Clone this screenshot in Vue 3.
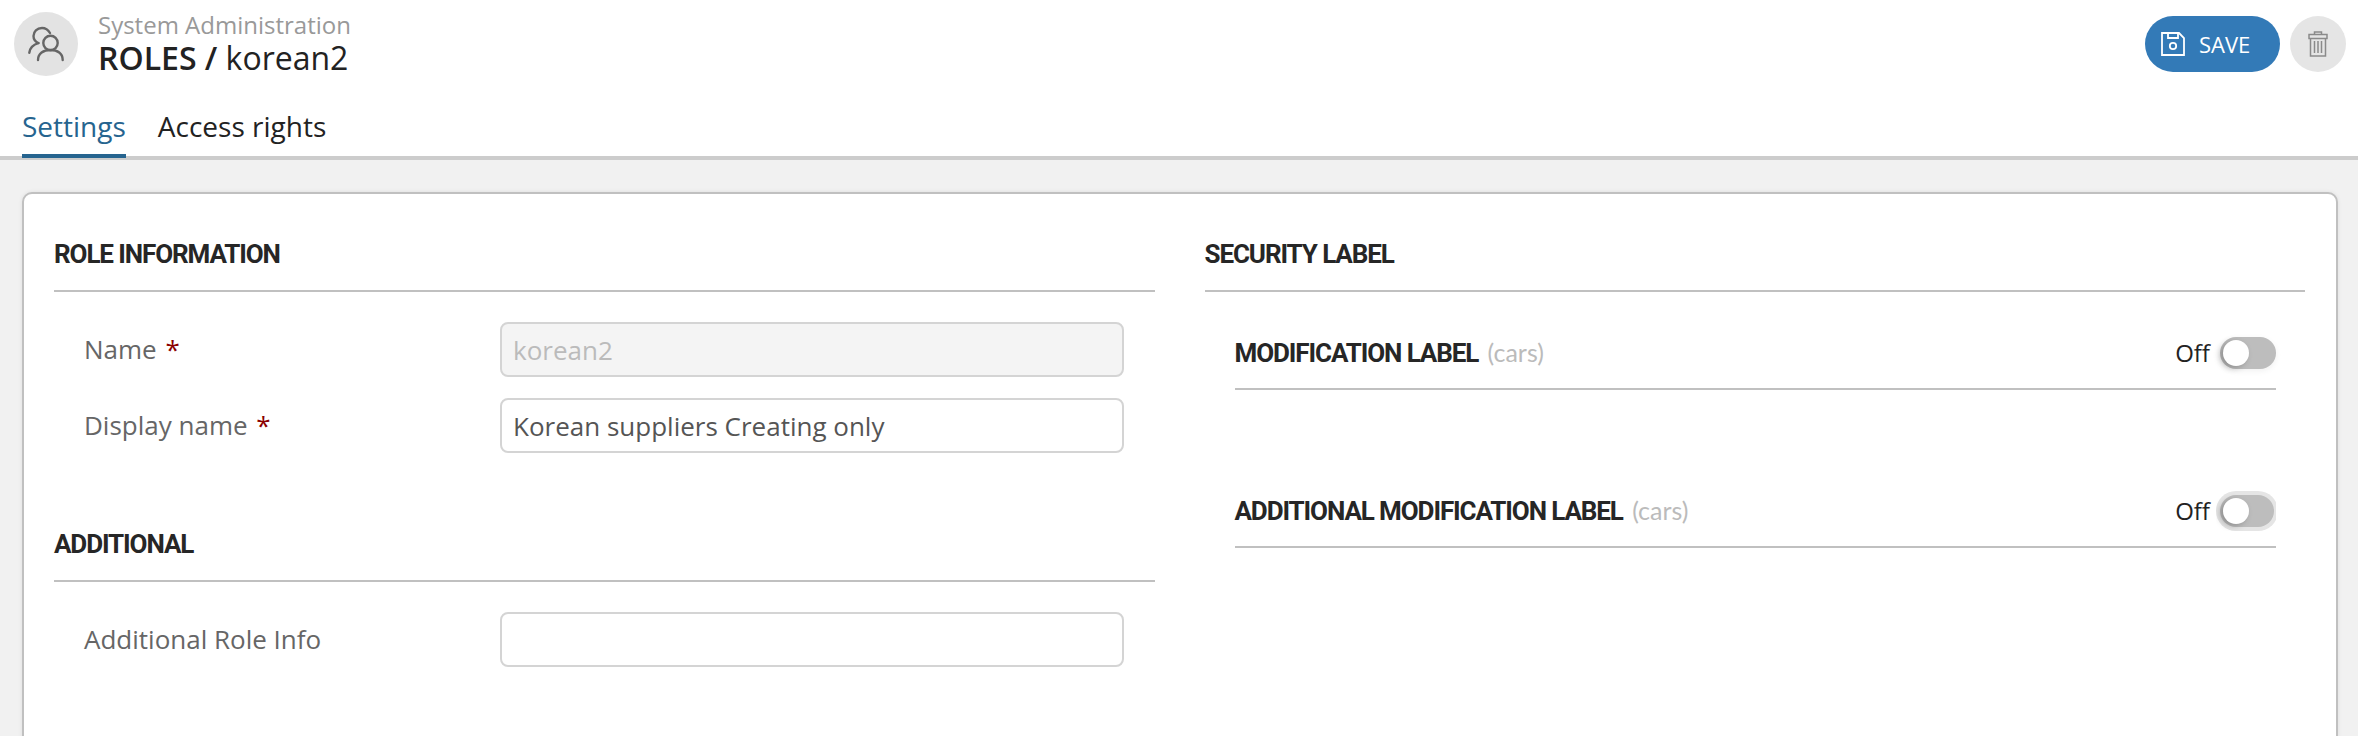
<script setup>
const leftTop = [
  { label: 'Name', required: true, value: 'korean2', disabled: true },
  { label: 'Display name', required: true, value: 'Korean suppliers Creating only', disabled: false }
]
const labels = [
  { title: 'MODIFICATION LABEL', focused: false },
  { title: 'ADDITIONAL MODIFICATION LABEL', focused: true }
]
</script>

<template>
  <div class="page">
    <header class="top">
      <div class="title-bar">
        <div class="avatar">
          <svg width="40" height="40" viewBox="0 0 40 40" fill="none" stroke="#666" stroke-width="2.4" stroke-linecap="round">
            <circle cx="24.500" cy="19" r="7.200" />
            <path d="M12 36c0-6.500 5.500-10 12.500-10S36.700 29.500 36.700 36" />
            <path d="M24 9C22 5.500 19 4 16 4 11 4 7.500 7.500 7.500 12c0 3 2 5.800 5 7" />
            <path d="M3.300 28.700c.7-4.700 4-8 9-9.500" />
          </svg>
        </div>
        <div class="titles">
          <div class="crumb">System Administration</div>
          <div class="title"><b>ROLES /</b> korean2</div>
        </div>
        <div class="actions">
          <button class="save" type="button">
            <svg width="24" height="24" viewBox="0 0 24 24" fill="none" stroke="#fff" stroke-width="1.800">
              <path d="M1 1h17l5 5v17H1z" />
              <path d="M7 1v5h10V1" />
              <circle cx="12" cy="14" r="3.200" />
            </svg>
            <span>SAVE</span>
          </button>
          <button class="trash" type="button" aria-label="Delete">
            <svg width="20" height="26" viewBox="0 0 20 26" fill="none" stroke="#8a8a8a" stroke-width="1.500">
              <path d="M1 3.500h18v4H1z" />
              <path d="M6.500 3.500V1h7v2.500" />
              <path d="M2.500 7.500V25h15V7.500" />
              <path d="M6.500 10v12M10 10v12M13.500 10v12" />
            </svg>
          </button>
        </div>
      </div>
      <nav class="tabs">
        <a class="tab active">Settings</a>
        <a class="tab">Access rights</a>
      </nav>
    </header>

    <main class="content">
      <section class="card">
        <div class="col">
          <h2 class="heading">ROLE INFORMATION</h2>
          <div class="fields">
            <div v-for="f in leftTop" :key="f.label" class="field">
              <label class="label">{{ f.label }} <span v-if="f.required" class="req">*</span></label>
              <input class="input" :value="f.value" :disabled="f.disabled" />
            </div>
          </div>
          <h2 class="heading second">ADDITIONAL</h2>
          <div class="fields">
            <div class="field">
              <label class="label">Additional Role Info</label>
              <input class="input" value="" />
            </div>
          </div>
        </div>
        <div class="col">
          <h2 class="heading">SECURITY LABEL</h2>
          <div class="switch-rows">
            <div v-for="l in labels" :key="l.title" class="switch-row">
              <div class="switch-name">{{ l.title }} <span class="muted">(cars)</span></div>
              <div class="switch-wrap">
                <span class="off">Off</span>
                <span class="toggle" :class="{ focused: l.focused }"><span class="knob"></span></span>
              </div>
            </div>
          </div>
        </div>
      </section>
    </main>
  </div>
</template>

<style scoped>
.page {
  height: 736px;
  overflow: hidden;
  background: #f1f1f1;
  font-family: "Open Sans", "Liberation Sans", sans-serif;
  color: #222;
  display: flex;
  flex-direction: column;
}
.top {
  background: #fff;
  border-bottom: 4px solid #ccc;
  height: 160px;
  box-sizing: border-box;
}
.title-bar {
  display: flex;
  align-items: flex-start;
  height: 100px;
  padding: 12px 12px 0 14px;
  box-sizing: border-box;
}
.avatar {
  width: 64px;
  height: 64px;
  border-radius: 50%;
  background: #e3e3e3;
  display: flex;
  align-items: center;
  justify-content: center;
  flex: none;
}
.titles {
  margin-left: 20px;
  flex: 1;
}
.crumb {
  font-size: 24px;
  line-height: 26px;
  color: #999;
}
.title {
  font-size: 32px;
  line-height: 40px;
  color: #222;
}
.title b { font-weight: 600; }
.actions {
  display: flex;
  gap: 10px;
  margin-top: 4px;
}
.save {
  height: 56px;
  width: 135px;
  border: 0;
  border-radius: 28px;
  background: #337ab7;
  color: #fff;
  font: 400 22px "Open Sans", sans-serif;
  display: flex;
  align-items: center;
  gap: 14px;
  padding: 0 0 0 16px;
}
.trash {
  width: 56px;
  height: 56px;
  border: 0;
  border-radius: 50%;
  background: #e5e5e5;
  display: flex;
  align-items: center;
  justify-content: center;
  padding: 0;
}
.tabs {
  display: flex;
  gap: 32px;
  padding-left: 22px;
  height: 58px;
}
.tab {
  font-size: 28px;
  line-height: 38px;
  padding-top: 7px;
  height: 58px;
  box-sizing: border-box;
  color: #222;
}
.tab.active {
  color: #26648f;
  border-bottom: 4px solid #26648f;
}
.content {
  flex: 1;
  padding: 32px 20px 0 22px;
  min-height: 0;
}
.card {
  background: #fff;
  border: 2px solid #c0c0c0;
  border-radius: 10px;
  height: 700px;
  box-sizing: border-box;
  padding: 42px 31px 0 30px;
  display: grid;
  grid-template-columns: 1fr 1fr;
  gap: 50px;
  box-shadow: 0 0 4px rgba(0, 0, 0, .08);
}
.heading {
  margin: 0;
  font: 700 26px/34px "Roboto", sans-serif;
  letter-spacing: -1.1px;
  color: #262626;
  padding: 1px 0 19px;
  border-bottom: 2px solid #c0c0c0;
}
.heading.second { margin-top: 73px; }
.fields {
  padding: 30px 31px 0 30px;
  display: flex;
  flex-direction: column;
  gap: 21px;
}
.field {
  display: flex;
  align-items: center;
  height: 55px;
}
.label {
  width: 416px;
  flex: none;
  font-size: 26px;
  color: #666;
  padding-bottom: 2px;
}
.req {
  color: #8b0000;
  margin-left: 2px;
}
.input {
  flex: 1;
  min-width: 0;
  height: 55px;
  box-sizing: border-box;
  border: 2px solid #d4d4d4;
  border-radius: 8px;
  padding: 0 11px;
  font: 400 26px "Open Sans", sans-serif;
  color: #555;
  background: #fff;
  outline: none;
}
.input:disabled {
  background: #f4f4f4;
  color: #bbb;
}
.switch-rows {
  padding: 29px 29px 0 30px;
  display: flex;
  flex-direction: column;
  gap: 89px;
}
.switch-row {
  display: flex;
  align-items: center;
  justify-content: space-between;
  padding: 16px 0 19px;
  border-bottom: 2px solid #c0c0c0;
}
.switch-name {
  font: 700 26px/32px "Roboto", sans-serif;
  letter-spacing: -1.1px;
  color: #262626;
  padding-bottom: 3px;
  height: 32px;
  box-sizing: border-box;
}
.muted {
  font: 400 25px/1 "Lato", sans-serif;
  letter-spacing: 0;
  color: #bbb;
  margin-left: 4px;
}
.switch-wrap {
  display: flex;
  align-items: center;
  gap: 10px;
  height: 32px;
}
.off {
  font-size: 24px;
  color: #222;
  padding-bottom: 2px;
}
.toggle {
  width: 56px;
  height: 32px;
  border-radius: 16px;
  background: #bdbdbd;
  display: flex;
  align-items: center;
  padding-left: 3px;
  box-sizing: border-box;
  box-shadow: 0 2px 6px rgba(0, 0, 0, .06);
}
.toggle.focused {
  width: 54px;
  margin-right: 2px;
  box-shadow: 0 0 0 4px #e5e5e5;
  clip-path: inset(-4px -2px -4px -4px);
}
.knob {
  width: 26px;
  height: 26px;
  border-radius: 50%;
  background: #fff;
  box-shadow: -3px 2px 6px rgba(0, 0, 0, .25);
}
</style>
